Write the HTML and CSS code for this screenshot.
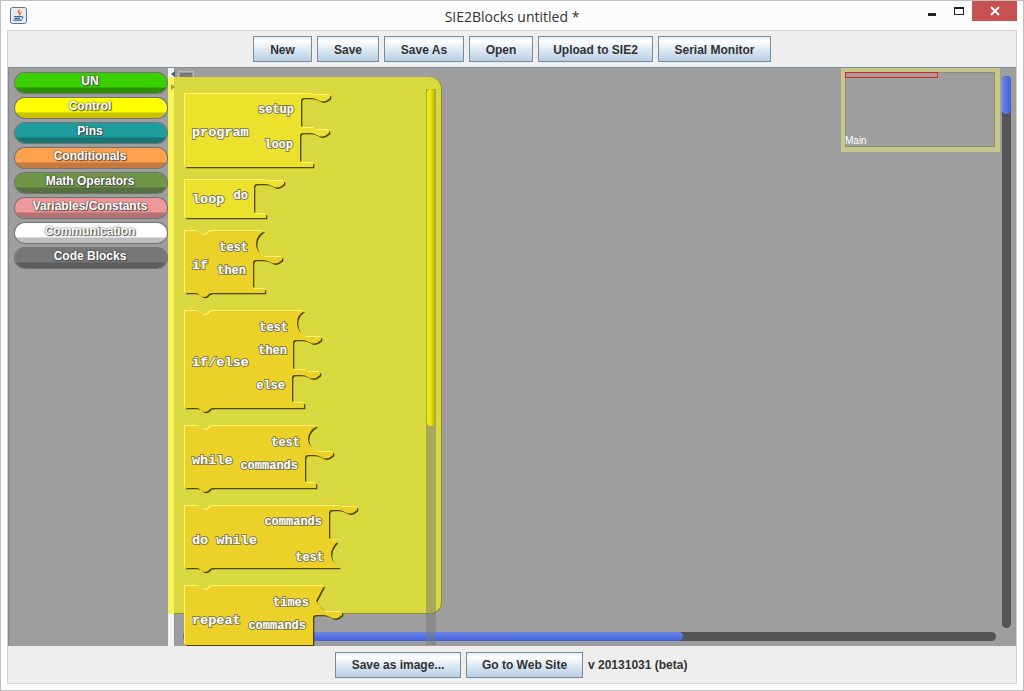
FILE: index.html
```html
<!DOCTYPE html>
<html lang="en">
<head>
    <meta charset="UTF-8">
    <title>SIE2Blocks untitled *</title>
    <link rel="stylesheet" href="styles.css">
</head>
<body>
    <div class="window">
        <div class="titlebar">
            <svg class="app-icon" width="17" height="17" viewBox="0 0 17 17">
                <rect x="0.5" y="0.5" width="16" height="16" rx="2" fill="#e3ecf5" stroke="#5f7388"/>
                <path d="M10 1.500 Q6 4 8.500 6.500 Q9.800 8 8.500 9 Q12.500 7.500 10.200 5.500 Q8.500 4 10 1.500Z" fill="#e8772e"/>
                <path d="M12 3.500 Q10.500 4.500 11.500 6" fill="none" stroke="#ee9a55" stroke-width="1"/>
                <path d="M4 9.500 H10.500 M4.500 11.300 H10 M3.500 13.200 H12 M10.500 9.500 Q14 9.500 12 11.500" fill="none" stroke="#2f6197" stroke-width="1.200"/>
            </svg>
            <div class="title">SIE2Blocks untitled *</div>
            <div class="win-controls">
                <div class="win-btn"><span class="win-min"></span></div>
                <div class="win-btn"><span class="win-max"></span></div>
                <div class="win-close">
                    <svg width="10" height="10" viewBox="0 0 10 10"><path d="M1 1 L9 9 M9 1 L1 9" stroke="#fff" stroke-width="2"/></svg>
                </div>
            </div>
        </div>

        <div class="frame">
            <div class="toolbar">
                <button class="btn w-new">New</button>
                <button class="btn w-save">Save</button>
                <button class="btn w-saveas">Save As</button>
                <button class="btn w-open">Open</button>
                <button class="btn w-upload">Upload to SIE2</button>
                <button class="btn w-serial">Serial Monitor</button>
            </div>

            <div class="main">
                <div class="palette">
                    <div class="pill un">UN</div>
                    <div class="pill control">Control</div>
                    <div class="pill pins">Pins</div>
                    <div class="pill conditionals">Conditionals</div>
                    <div class="pill math">Math Operators</div>
                    <div class="pill variables">Variables/Constants</div>
                    <div class="pill communication">Communication</div>
                    <div class="pill code">Code Blocks</div>
                </div>
                <div class="splitter"></div>
                <div class="canvas"></div>

                <!-- things floating on the workspace -->
                <div class="vscroll"><div class="vthumb"></div></div>
                <div class="hscroll"><div class="hthumb"></div></div>
                <div class="arrow-left"></div>
                <div class="collapse-icon"><span></span></div>
                <div class="drawer"></div>
                <div class="arrow-right"></div>
                <div class="drawer-track"></div>
                <div class="drawer-thumb"></div>

                <svg class="blocks" width="1008" height="578" viewBox="8 68 1008 578">
                    <defs>
                        <path id="b-program" d="M185 94 H312 L314 95 H330 V98 Q324 104 318 100 Q315 98 311 98 H304 Q301 98 301 101 V125 Q301 128 304 128 H314 L316 130 H329 V133 Q323 139 317 135 Q314 133 310 133 H303 Q300 133 300 136 V160 Q300 163 303 163 H313 V167 H185 Z"/>
                        <path id="b-loop" d="M185 180 H265 L267 181 H284 V184 Q278 190 272 186 Q269 184 265 184 H257 Q254 184 254 187 V211 Q254 214 257 214 H266 V218 H185 Z"/>
                        <path id="b-if" d="M185 231 H196 Q199 231 201 234 Q204 236 207 234 Q209 231 212 231 H264 Q256 236 256 244 Q256 252 265 257 H282 V260 Q276 266 270 262 Q267 260 263 260 H256 Q253 260 253 263 V286 Q253 289 256 289 H265 V293 H212 Q209 293 207 296 Q204 298 201 296 Q199 293 196 293 H185 Z"/>
                        <path id="b-ifelse" d="M185 311 H197 Q200 311 202 314 Q205 316 208 314 Q210 311 213 311 H304 Q297 315 297 323 Q297 332 306 337 H321 V340 Q315 346 309 342 Q306 340 302 340 H296 Q293 340 293 343 V367 Q293 370 296 370 H306 L308 372 H320 V375 Q314 381 308 377 Q305 375 301 375 H295 Q292 375 292 378 V400 Q292 403 295 403 H304 V408 H213 Q210 408 208 411 Q205 413 202 411 Q200 408 197 408 H185 Z"/>
                        <path id="b-while" d="M185 426 H197 Q200 426 202 429 Q205 431 208 429 Q210 426 213 426 H317 Q308 431 308 439 Q308 447 318 452 H333 V455 Q327 461 321 457 Q318 455 314 455 H308 Q305 455 305 458 V480 Q305 483 308 483 H316 V488 H213 Q210 488 208 491 Q205 493 202 491 Q200 488 197 488 H185 Z"/>
                        <path id="b-dowhile" d="M185 506 H197 Q200 506 202 509 Q205 511 208 509 Q210 506 213 506 H340 L342 507 H357 V510 Q351 516 345 512 Q342 510 338 510 H332 Q329 510 329 513 V537 Q329 540 332 540 L337 542 Q331 548 331 555 Q331 562 340 568 H213 Q210 568 208 571 Q205 573 202 571 Q200 568 197 568 H185 Z"/>
                        <path id="b-repeat" d="M185 586 H197 Q200 586 202 589 Q205 591 208 589 Q210 586 213 586 H324 L316 601 L325 612 H342 V615 Q336 621 330 617 Q327 615 323 615 H316 Q313 615 313 618 V645 H185 Z"/>
                    </defs>

                    <g class="block bright">
                        <use href="#b-program" class="rim-dark"/><use href="#b-program" class="rim-light"/><use href="#b-program"/>
                        <text class="name" x="192" y="136">program</text>
                        <text class="arg" x="294" y="113">setup</text>
                        <text class="arg" x="293" y="148">loop</text>
                    </g>
                    <g class="block bright">
                        <use href="#b-loop" class="rim-dark"/><use href="#b-loop" class="rim-light"/><use href="#b-loop"/>
                        <text class="name" x="192" y="203">loop</text>
                        <text class="arg" x="248" y="199">do</text>
                    </g>
                    <g class="block">
                        <use href="#b-if" class="rim-dark"/><use href="#b-if" class="rim-light"/><use href="#b-if"/>
                        <text class="name" x="192" y="269">if</text>
                        <text class="arg" x="248" y="251">test</text>
                        <text class="arg" x="246" y="274">then</text>
                    </g>
                    <g class="block">
                        <use href="#b-ifelse" class="rim-dark"/><use href="#b-ifelse" class="rim-light"/><use href="#b-ifelse"/>
                        <text class="name" x="192" y="366">if/else</text>
                        <text class="arg" x="288" y="331">test</text>
                        <text class="arg" x="287" y="354">then</text>
                        <text class="arg" x="285" y="389">else</text>
                    </g>
                    <g class="block">
                        <use href="#b-while" class="rim-dark"/><use href="#b-while" class="rim-light"/><use href="#b-while"/>
                        <text class="name" x="192" y="464">while</text>
                        <text class="arg" x="300" y="446">test</text>
                        <text class="arg" x="298" y="469">commands</text>
                    </g>
                    <g class="block">
                        <use href="#b-dowhile" class="rim-dark"/><use href="#b-dowhile" class="rim-light"/><use href="#b-dowhile"/>
                        <text class="name" x="192" y="544">do while</text>
                        <text class="arg" x="322" y="525">commands</text>
                        <text class="arg" x="324" y="561">test</text>
                    </g>
                    <g class="block">
                        <use href="#b-repeat" class="rim-dark"/><use href="#b-repeat" class="rim-light"/><use href="#b-repeat"/>
                        <text class="name" x="192" y="624">repeat</text>
                        <text class="arg" x="309" y="606">times</text>
                        <text class="arg" x="306" y="629">commands</text>
                    </g>
                </svg>

                <div class="minimap">
                    <div class="minimap-view"></div>
                    <div class="minimap-label">Main</div>
                </div>
            </div>

            <div class="footer">
                <button class="btn w-image">Save as image...</button>
                <button class="btn w-site">Go to Web Site</button>
                <span class="version">v 20131031 (beta)</span>
            </div>
        </div>
    </div>
</body>
</html>
```

FILE: styles.css
```css
html, body {
    margin: 0;
    padding: 0;
}
body {
    width: 1024px;
    height: 691px;
    overflow: hidden;
    background: #fff;
    font-family: "Liberation Sans", Arial, sans-serif;
}
.window {
    width: 1024px;
    height: 691px;
    box-sizing: border-box;
    border: 1px solid #bfbfbf;
    background: #fcfcfc;
    display: flex;
    flex-direction: column;
}

/* title bar */
.titlebar {
    height: 29px;
    flex: none;
    display: grid;
    grid-template-columns: 1fr auto 1fr;
    padding: 0 6px;
}
.app-icon {
    margin: 6px 0 0 3px;
}
.title {
    font-family: "Open Sans", "Noto Sans", sans-serif;
    font-size: 14px;
    line-height: 31px;
    color: #333;
}
.win-controls {
    display: flex;
    justify-content: flex-end;
    align-items: flex-start;
}
.win-btn {
    width: 27px;
    height: 20px;
    position: relative;
}
.win-min {
    display: block;
    width: 8px;
    height: 3px;
    background: #222;
    margin: 12px 0 0 10px;
}
.win-max {
    display: block;
    width: 8px;
    height: 5px;
    border: 1px solid #222;
    border-top-width: 2px;
    margin: 6px 0 0 9px;
}
.win-close {
    width: 45px;
    height: 20px;
    background: #c75050;
    display: flex;
    align-items: center;
    justify-content: center;
}

/* inner frame */
.frame {
    flex: 1;
    margin: 0 6px 6px;
    border: 1px solid #d4d4d4;
    background: #eee;
    display: flex;
    flex-direction: column;
}
.toolbar {
    height: 36px;
    flex: none;
    border-bottom: 1px solid #7c8b9a;
    display: flex;
    justify-content: center;
    align-items: center;
    gap: 5px;
}
.footer {
    height: 37px;
    flex: none;
    display: flex;
    justify-content: center;
    align-items: center;
    gap: 5px;
}
.btn {
    height: 26px;
    padding: 1px 0 0;
    border: 1px solid #7a8a99;
    background: linear-gradient(#e3edf7 0, #fff 18%, #dfe9f3 50%, #b9cfe6 100%);
    font-family: "Liberation Sans", Arial, sans-serif;
    font-size: 12px;
    font-weight: bold;
    color: #333;
}
.w-new { width: 59px; }
.w-save { width: 62px; }
.w-saveas { width: 80px; }
.w-open { width: 64px; }
.w-upload { width: 115px; }
.w-serial { width: 113px; }
.w-image { width: 126px; }
.w-site { width: 117px; }
.version {
    width: 101px;
    font-size: 12px;
    font-weight: bold;
    color: #333;
}

/* main area */
.main {
    flex: 1;
    display: flex;
    position: relative;
    overflow: hidden;
}
.palette {
    width: 160px;
    box-sizing: border-box;
    flex: none;
    background: #9e9e9e;
    border-left: 1px solid #7c8b9a;
    padding: 5px 0 0 6px;
    display: flex;
    flex-direction: column;
    gap: 5px;
}
.pill {
    width: 152px;
    height: 20px;
    box-sizing: border-box;
    padding-right: 2px;
    border-radius: 10px;
    box-shadow: 0 0 0 1px rgba(60, 60, 60, 0.45);
    color: #fff;
    font-size: 12px;
    font-weight: bold;
    line-height: 16px;
    text-align: center;
    text-shadow: 0 0 2px #333, 1px 1px 1px #555;
}
.un { background: linear-gradient(#3ad000 68%, #2c8f05 76%); }
.control { background: linear-gradient(#ffff00 68%, #c9c400 76%); }
.pins { background: linear-gradient(#1d9d9d 68%, #167575 76%); }
.conditionals { background: linear-gradient(#ffa24d 68%, #c47a3e 76%); }
.math { background: linear-gradient(#6f9547 68%, #567040 76%); }
.variables { background: linear-gradient(#ee9999 68%, #b37373 76%); }
.communication { background: linear-gradient(#fff 68%, #bdbdbd 76%); }
.code { background: linear-gradient(#777 68%, #5c5c5c 76%); }

.splitter {
    width: 6px;
    flex: none;
    background: #f2f2f2;
}
.canvas {
    flex: 1;
    background: #9e9e9e;
    border-left: 1px solid #8a96a2;
}

/* drawer over the workspace */
.drawer {
    position: absolute;
    left: 160px;
    top: 9px;
    width: 274px;
    height: 537px;
    box-sizing: border-box;
    background: rgba(227, 226, 46, 0.85);
    border-left: 6px solid #f8f45c;
    border-radius: 0 12px 12px 0;
    box-shadow: inset 0 -1px 0 #8f8e30, inset -1px 0 0 #8f8e30;
}
.arrow-left {
    position: absolute;
    left: 163px;
    top: 3px;
    border: 3px solid transparent;
    border-right: 4px solid #3b5a8f;
    border-left: 0;
}
.arrow-right {
    position: absolute;
    left: 163px;
    top: 16px;
    border: 3px solid transparent;
    border-left: 4px solid #a0a03a;
    border-right: 0;
}
.collapse-icon {
    position: absolute;
    left: 170px;
    top: 3px;
    width: 14px;
    height: 14px;
    border: 1px solid #b8b8b8;
}
.collapse-icon span {
    display: block;
    height: 3px;
    margin: 1px 1px 0;
    background: #7d7d7d;
    border-top: 1px solid #6f6f6f;
}
.drawer-track {
    position: absolute;
    left: 418px;
    top: 21px;
    width: 10px;
    height: 556px;
    background: rgba(120, 120, 120, 0.5);
}
.drawer-thumb {
    position: absolute;
    left: 419px;
    top: 21px;
    width: 8px;
    height: 337px;
    border-radius: 4px;
    background: linear-gradient(90deg, #f2ec10, #e8e400 50%, #b8b400);
}

/* blocks */
.blocks {
    position: absolute;
    left: 0;
    top: 0;
}
.block {
    fill: #ecd129;
}
.block.bright {
    fill: #ece12d;
}
.rim-dark {
    fill: #4f4800;
    transform: translate(1.300px, 1.300px);
}
.rim-light {
    fill: #fff46c;
    transform: translate(-1px, -1px);
}
.block text {
    font-family: "Liberation Mono", "DejaVu Sans Mono", monospace;
    font-weight: bold;
    fill: #fff;
    stroke: #6a6a55;
    stroke-width: 2px;
    stroke-opacity: 0.8;
    paint-order: stroke;
}
.name {
    font-size: 13.500px;
}
.arg {
    font-size: 12px;
    text-anchor: end;
}

/* minimap and scrollbars */
.minimap {
    position: absolute;
    left: 833px;
    top: 0;
    width: 159px;
    height: 84px;
    box-sizing: border-box;
    border: 4px solid #c8c88e;
    border-width: 4px 5px 5px 4px;
    box-shadow: inset 0 0 0 1px #8f8f70;
    background: #9e9e9e;
}
.minimap-view {
    position: absolute;
    left: 0;
    top: 0;
    width: 91px;
    height: 4px;
    border: 1px solid #e82020;
}
.minimap-label {
    position: absolute;
    left: 0;
    bottom: 0;
    font-size: 10px;
    line-height: 12px;
    color: #fff;
}
.vscroll {
    position: absolute;
    left: 994px;
    top: 8px;
    width: 9px;
    height: 552px;
    border-radius: 5px;
    background: #555;
}
.vthumb {
    height: 38px;
    border-radius: 5px;
    background: linear-gradient(90deg, #6c86ea, #3f5fdc);
}
.hscroll {
    position: absolute;
    left: 175px;
    top: 564px;
    width: 813px;
    height: 9px;
    border-radius: 5px;
    background: #555;
}
.hthumb {
    width: 500px;
    height: 9px;
    border-radius: 5px;
    background: linear-gradient(#6c86ea, #3f5fdc);
}
```
